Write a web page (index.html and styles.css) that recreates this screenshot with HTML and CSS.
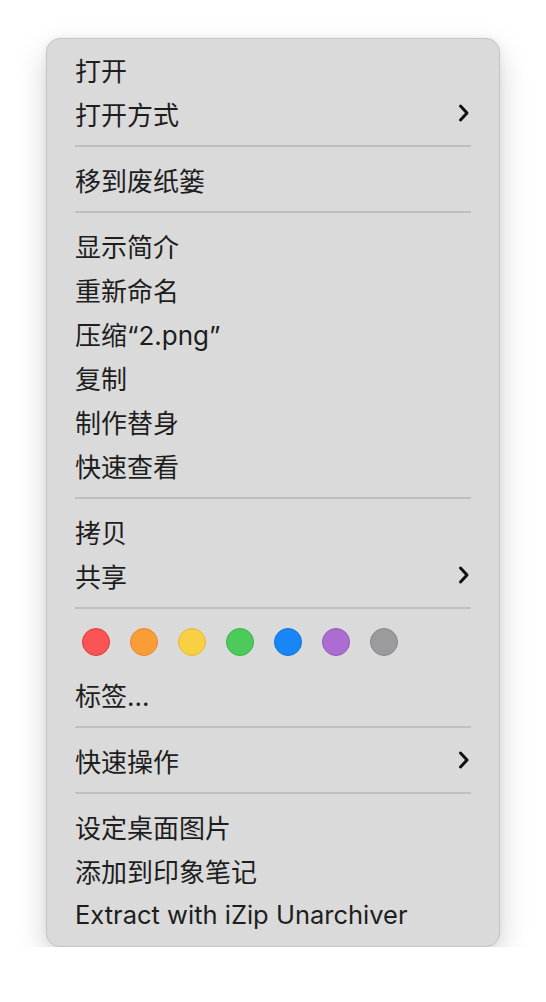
FILE: index.html
```html
<!DOCTYPE html>
<html lang="zh">
<head>
<meta charset="utf-8">
<link rel="stylesheet" href="styles.css">
</head>
<body>
<div class="menu">
  <div class="item">打开</div>
  <div class="item sub">打开方式<svg class="chev" viewBox="0 0 14 20"><path d="M3.5 3 L10 10 L3.5 17"/></svg></div>
  <div class="sep"></div>
  <div class="item">移到废纸篓</div>
  <div class="sep"></div>
  <div class="item">显示简介</div>
  <div class="item">重新命名</div>
  <div class="item">压缩“2.png”</div>
  <div class="item">复制</div>
  <div class="item">制作替身</div>
  <div class="item">快速查看</div>
  <div class="sep"></div>
  <div class="item">拷贝</div>
  <div class="item sub">共享<svg class="chev" viewBox="0 0 14 20"><path d="M3.5 3 L10 10 L3.5 17"/></svg></div>
  <div class="sep"></div>
  <div class="tags">
    <span class="dot red"></span>
    <span class="dot orange"></span>
    <span class="dot yellow"></span>
    <span class="dot green"></span>
    <span class="dot blue"></span>
    <span class="dot purple"></span>
    <span class="dot gray"></span>
  </div>
  <div class="item">标签...</div>
  <div class="sep"></div>
  <div class="item sub">快速操作<svg class="chev" viewBox="0 0 14 20"><path d="M3.5 3 L10 10 L3.5 17"/></svg></div>
  <div class="sep"></div>
  <div class="item">设定桌面图片</div>
  <div class="item">添加到印象笔记</div>
  <div class="item latin">Extract with iZip Unarchiver</div>
</div>
</body>
</html>
```

FILE: styles.css
```css
html, body {
  margin: 0;
  padding: 0;
  background: #ffffff;
}
body {
  padding: 38px 0 0 46px;
  font-family: "Inter", "Noto Sans CJK SC", sans-serif;
}
.menu {
  width: 454px;
  box-sizing: border-box;
  background: #dadada;
  border: 1px solid #c4c4c4;
  border-radius: 14px;
  box-shadow: 0 12px 30px rgba(0,0,0,0.18), 0 0 6px rgba(0,0,0,0.06);
  padding: 8px 28px 10px 28px;
  display: flex;
  flex-direction: column;
}
.item {
  height: 44px;
  display: flex;
  align-items: center;
  justify-content: space-between;
  font-size: 26px;
  color: #1e1e1e;
}
.item.latin {
  font-size: 25.5px;
}
.chev {
  width: 14px;
  height: 20px;
}
.chev path {
  fill: none;
  stroke: #111;
  stroke-width: 3;
  stroke-linecap: round;
  stroke-linejoin: round;
}
.sep {
  height: 22px;
  display: flex;
  align-items: center;
}
.sep::before {
  content: "";
  display: block;
  width: 100%;
  height: 2px;
  background: #bfbfbf;
}
.tags {
  height: 46px;
  display: flex;
  align-items: center;
  gap: 20px;
  padding-left: 7px;
  margin-bottom: 7px;
}
.dot {
  width: 28px;
  height: 28px;
  box-sizing: border-box;
  border-radius: 50%;
  border: 1px solid rgba(0,0,0,0.15);
}
.red { background: #fb5454; border-color: #e0393b; }
.orange { background: #fb9d37; border-color: #e8872a; }
.yellow { background: #f9cf44; border-color: #e5b935; }
.green { background: #4dcb5a; border-color: #37b146; }
.blue { background: #1886f5; border-color: #0e72dc; }
.purple { background: #ab6dd1; border-color: #9257ba; }
.gray { background: #9b9b9d; border-color: #878789; }
```
